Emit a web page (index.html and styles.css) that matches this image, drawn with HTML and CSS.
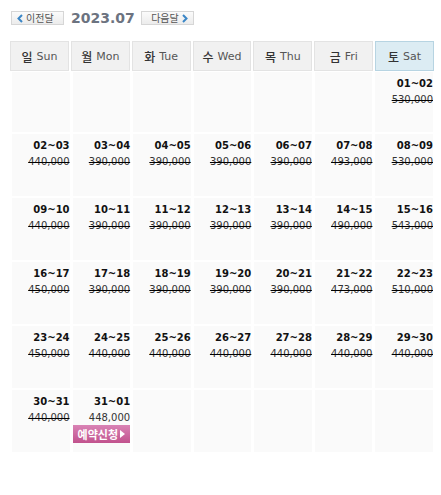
FILE: index.html
```html
<!DOCTYPE html>
<html lang="ko">
<head>
<meta charset="utf-8">
<link rel="stylesheet" href="styles.css">
</head>
<body>
<div class="cal">
  <div class="nav">
    <a class="navbtn prev"><svg class="chev" width="6" height="9" viewBox="0 0 6 9"><path d="M5 1 L1.5 4.5 L5 8" fill="none" stroke="#3b86c6" stroke-width="2"/></svg>이전달</a>
    <span class="title">2023.07</span>
    <a class="navbtn next">다음달<svg class="chev" width="6" height="9" viewBox="0 0 6 9"><path d="M1 1 L4.5 4.5 L1 8" fill="none" stroke="#3b86c6" stroke-width="2"/></svg></a>
  </div>
  <div class="head">
    <div class="hc"><span class="ko">일</span> Sun</div>
    <div class="hc"><span class="ko">월</span> Mon</div>
    <div class="hc"><span class="ko">화</span> Tue</div>
    <div class="hc"><span class="ko">수</span> Wed</div>
    <div class="hc"><span class="ko">목</span> Thu</div>
    <div class="hc"><span class="ko">금</span> Fri</div>
    <div class="hc sat"><span class="ko">토</span> Sat</div>
  </div>
  <div class="grid">
    <div class="c"></div><div class="c"></div><div class="c"></div><div class="c"></div><div class="c"></div><div class="c"></div>
    <div class="c"><div class="d">01~02</div><div class="p">530,000</div></div>

    <div class="c"><div class="d">02~03</div><div class="p">440,000</div></div>
    <div class="c"><div class="d">03~04</div><div class="p">390,000</div></div>
    <div class="c"><div class="d">04~05</div><div class="p">390,000</div></div>
    <div class="c"><div class="d">05~06</div><div class="p">390,000</div></div>
    <div class="c"><div class="d">06~07</div><div class="p">390,000</div></div>
    <div class="c"><div class="d">07~08</div><div class="p">493,000</div></div>
    <div class="c"><div class="d">08~09</div><div class="p">530,000</div></div>

    <div class="c"><div class="d">09~10</div><div class="p">440,000</div></div>
    <div class="c"><div class="d">10~11</div><div class="p">390,000</div></div>
    <div class="c"><div class="d">11~12</div><div class="p">390,000</div></div>
    <div class="c"><div class="d">12~13</div><div class="p">390,000</div></div>
    <div class="c"><div class="d">13~14</div><div class="p">390,000</div></div>
    <div class="c"><div class="d">14~15</div><div class="p">490,000</div></div>
    <div class="c"><div class="d">15~16</div><div class="p">543,000</div></div>

    <div class="c"><div class="d">16~17</div><div class="p">450,000</div></div>
    <div class="c"><div class="d">17~18</div><div class="p">390,000</div></div>
    <div class="c"><div class="d">18~19</div><div class="p">390,000</div></div>
    <div class="c"><div class="d">19~20</div><div class="p">390,000</div></div>
    <div class="c"><div class="d">20~21</div><div class="p">390,000</div></div>
    <div class="c"><div class="d">21~22</div><div class="p">473,000</div></div>
    <div class="c"><div class="d">22~23</div><div class="p">510,000</div></div>

    <div class="c"><div class="d">23~24</div><div class="p">450,000</div></div>
    <div class="c"><div class="d">24~25</div><div class="p">440,000</div></div>
    <div class="c"><div class="d">25~26</div><div class="p">440,000</div></div>
    <div class="c"><div class="d">26~27</div><div class="p">440,000</div></div>
    <div class="c"><div class="d">27~28</div><div class="p">440,000</div></div>
    <div class="c"><div class="d">28~29</div><div class="p">440,000</div></div>
    <div class="c"><div class="d">29~30</div><div class="p">440,000</div></div>

    <div class="c"><div class="d">30~31</div><div class="p">440,000</div></div>
    <div class="c"><div class="d">31~01</div><div class="p open">448,000</div><a class="book">예약신청<svg width="5" height="8" viewBox="0 0 5 8"><path d="M0 0 L5 4 L0 8 Z" fill="#fff"/></svg></a></div>
    <div class="c"></div><div class="c"></div><div class="c"></div><div class="c"></div><div class="c"></div>
  </div>
</div>
</body>
</html>
```
FILE: styles.css
```css
html, body { margin: 0; padding: 0; background: #fff; }
body { font-family: "DejaVu Sans", "Noto Sans CJK KR", sans-serif; color: #333; }
.cal { padding: 11px 0 0 0; }
.nav { display: flex; align-items: center; height: 14px; margin-left: 11px; }
.navbtn {
  display: flex; align-items: center; gap: 3px;
  height: 12px; padding: 0 5px;
  border: 1px solid #d6d6d6;
  background: linear-gradient(#fbfbfb, #ececec);
  font-family: "Noto Sans CJK KR", sans-serif; font-size: 10px; line-height: 12px;
  color: #555;
}
.navbtn.prev { width: 41px; padding-left: 5px; }
.navbtn.next { width: 41px; margin-left: 6px; justify-content: flex-end; }
.chev { display: block; }
.title {
  margin-left: 7px;
  font-family: "DejaVu Sans", sans-serif; font-weight: bold; font-size: 14px; line-height: 14px;
  color: #6c7380;
}
.head {
  display: grid; grid-template-columns: repeat(7, 1fr); column-gap: 2px;
  margin: 16px 0 0 10px; width: 424px;
}
.hc {
  box-sizing: border-box; height: 30px;
  border: 1px solid #e3e3e3; background: #f1f1f1;
  display: flex; align-items: center; justify-content: center;
  font-family: "DejaVu Sans", sans-serif; font-size: 11px; color: #555;
}
.hc .ko { font-family: "Noto Sans CJK KR", sans-serif; font-size: 12px; font-weight: 500; color: #333; margin-right: 4px; }
.hc.sat { background: #dcecf3; border-color: #b7d4e2; }
.grid {
  display: grid; grid-template-columns: repeat(7, 1fr);
  grid-template-rows: 60px repeat(5, 62px);
  column-gap: 3px; row-gap: 2px;
  margin: 1px 0 0 12px; width: 421px;
}
.c { background: #fafafa; text-align: right; padding-top: 4px; display: flex; flex-direction: column; align-items: stretch; }
.d { font-weight: bold; font-size: 10px; line-height: 16px; color: #111; }
.p { font-size: 10px; line-height: 16px; color: #333; text-decoration: line-through; text-decoration-color: #000; }
.p.open { text-decoration: none; }
.book {
  display: flex; align-items: center; justify-content: center; gap: 2px;
  height: 18px; margin-top: -1px;
  background: linear-gradient(#d983b5, #c1528d);
  font-family: "Noto Sans CJK KR", sans-serif; font-weight: bold; font-size: 11px; color: #fff;
}
```
